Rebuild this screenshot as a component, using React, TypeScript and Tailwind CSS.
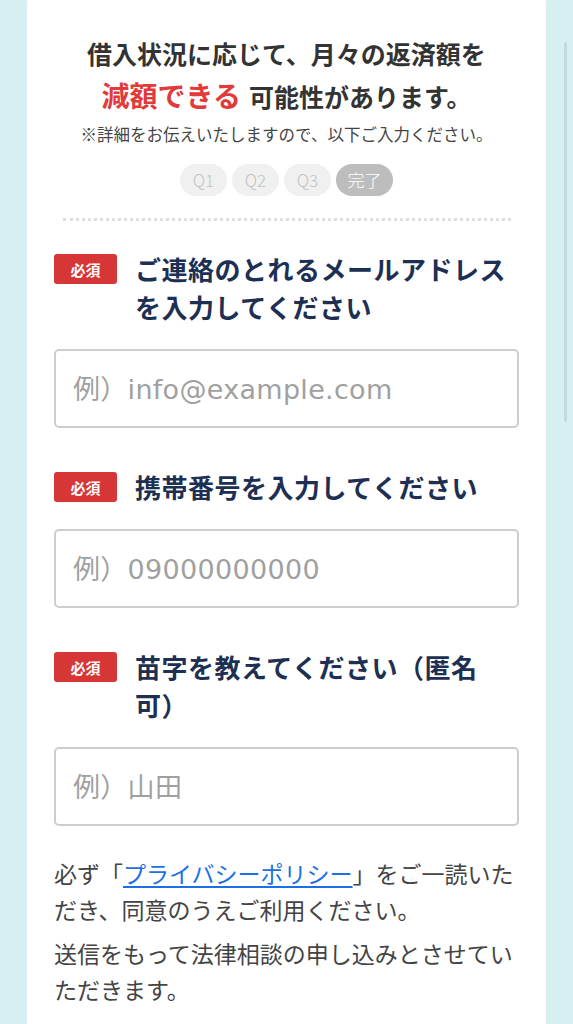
import React from "react";

const FONT = { fontFamily: '"Noto Sans CJK JP", "Noto Sans", sans-serif' };
const INPUT_FONT = { fontFamily: '"DejaVu Sans", "Noto Sans CJK JP", sans-serif' };

function Badge() {
  return (
    <span className="mt-[4px] flex h-[30px] w-[63px] shrink-0 items-center justify-center rounded-[3px] bg-[#d63636] text-[15px] font-bold leading-none text-white">
      必須
    </span>
  );
}

function Field({ title, placeholder }: { title: string; placeholder: string }) {
  return (
    <div className="flex flex-col gap-[23px]">
      <div className="flex items-start gap-[18px]">
        <Badge />
        <h2 className="text-[26px] font-bold leading-[38px] tracking-[0.5px] text-[#1d3053] [text-spacing-trim:space-all]">
          {title}
        </h2>
      </div>
      <input
        type="text"
        placeholder={placeholder}
        className="h-[79px] w-full rounded-[5px] border-2 border-[#cdcdcd] bg-white px-[17px] pt-[2px] text-[27px] font-normal tracking-[0.3px] text-[#333] outline-none placeholder:text-[#a0a0a0]"
        style={INPUT_FONT}
      />
    </div>
  );
}

export default function App() {
  return (
    <div className="relative min-h-screen bg-[#d6eff1]" style={FONT}>
      <div className="mx-[27px] -mt-[8px] rounded-t-[12px] bg-white px-[27px] pb-[40px] pt-[40px]">
        <div className="flex flex-col items-center">
          <h1 className="text-center text-[25px] font-bold leading-[42px] text-[#333]">
            借入状況に応じて、月々の返済額を
            <br />
            <span className="text-[28px] text-[#e23a3a]">減額できる</span>
            <span className="ml-[8px]">可能性があります。</span>
          </h1>
          <p className="mt-[5px] text-center text-[16.5px] leading-[24px] text-[#444]">
            ※詳細をお伝えいたしますので、以下ご入力ください。
          </p>
          <div className="mt-[18px] flex gap-[5px]">
            {["Q1", "Q2", "Q3"].map((q) => (
              <span
                key={q}
                className="flex h-[32px] w-[47px] items-center justify-center rounded-full bg-[#f0f0f0] text-[17px] font-light text-[#c2c2c2]"
              >
                {q}
              </span>
            ))}
            <span className="flex h-[32px] w-[57px] items-center justify-center rounded-full bg-[#bdbdbd] text-[17px] font-light text-white">
              完了
            </span>
          </div>
          <div className="mx-[8px] mt-[22px] w-[448px] border-t-[3px] border-dotted border-[#dedede]" />
        </div>

        <div className="mt-[29px] flex flex-col gap-[40px]">
          <Field title="ご連絡のとれるメールアドレスを入力してください" placeholder="例）info@example.com" />
          <Field title="携帯番号を入力してください" placeholder="例）09000000000" />
          <Field title="苗字を教えてください（匿名可）" placeholder="例）山田" />
        </div>

        <div className="mt-[29px] flex flex-col gap-[8px] text-[23px] leading-[36px] text-[#444] [text-spacing-trim:space-all]">
          <p>
            必ず「
            <a href="#" className="text-[#1d6fe8] underline underline-offset-[3px]">
              プライバシーポリシー
            </a>
            」をご一読いただき、同意のうえご利用ください。
          </p>
          <p>送信をもって法律相談の申し込みとさせていただきます。</p>
        </div>
      </div>
      <div className="absolute right-[6px] top-[50px] h-[380px] w-[3px] rounded-full bg-[#c3d9db]" />
    </div>
  );
}
